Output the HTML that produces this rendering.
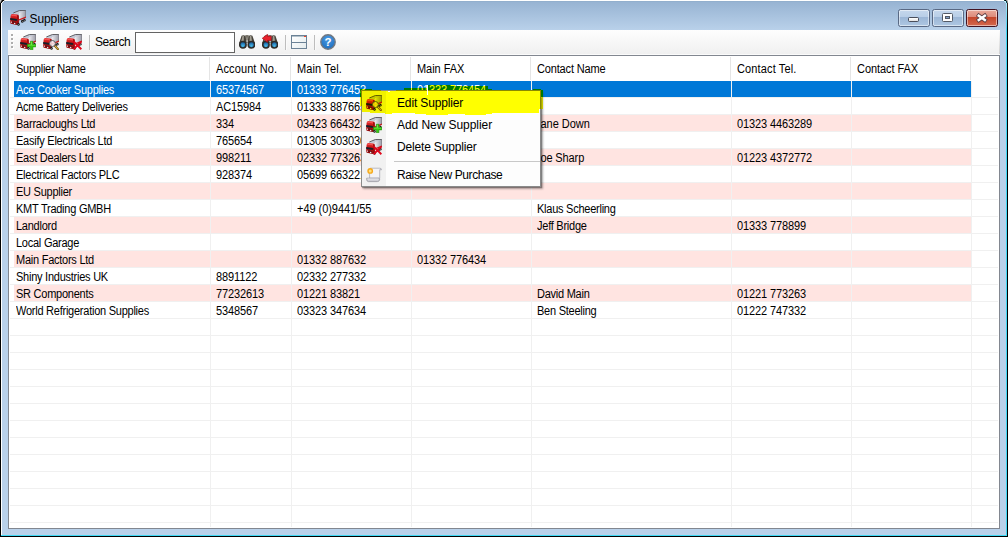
<!DOCTYPE html>
<html><head><meta charset="utf-8"><title>Suppliers</title>
<style>
html,body{margin:0;padding:0;}
body{width:1008px;height:537px;position:relative;overflow:hidden;background:#000;font-family:"Liberation Sans",sans-serif;}
.abs{position:absolute;}
#frame{left:2px;top:1px;width:1004px;height:534px;background:#b9d1ea;}
#title{left:2px;top:1px;width:1004px;height:29px;background:linear-gradient(#8facca 0,#98b4d3 1.5px,#b9d1ea 29px);}
#tb{left:8px;top:30px;width:992px;height:25px;background:linear-gradient(#fefefe 0,#f0f0f0 24px,#fbfbfb 24px);}
#grid{left:8px;top:55px;width:990px;height:472px;background:#fff;border:1px solid #828790;}
.t{position:absolute;white-space:nowrap;font-size:12px;line-height:14px;color:#000;letter-spacing:-0.27px;transform:scaleX(0.917);transform-origin:0 0;}
.vl{position:absolute;width:1px;background:#f0f0f0;}
.hl{position:absolute;height:1px;background:#f0f0f0;left:10px;width:988px;}
.row{position:absolute;left:14px;width:957px;height:16px;}
.wb{top:9px;width:30px;height:16px;border:1px solid #596984;border-radius:2.5px;background:linear-gradient(#c5d7ec 0,#b8cee7 44%,#9bb6d6 44%,#aec7e2 100%);box-shadow:inset 0 0 0 1px rgba(255,255,255,.5);}
.wc{border-color:#431422;background:linear-gradient(#e9a99a 0,#dd8a7a 44%,#c4452a 44%,#d4694e 100%);}
.grip{width:2px;height:2px;background:#adadad;box-shadow:1px 1px 0 #fff;}
.sep{top:35px;width:1px;height:15px;background:#bdbdbd;box-shadow:1px 0 0 #fafafa;}
.mi{position:absolute;left:35px;font-size:12px;line-height:15px;color:#000;letter-spacing:-0.3px;white-space:nowrap;}
</style></head><body>
<div class="abs" id="frame"></div>
<div class="abs" style="left:1px;top:0;width:1006px;height:1px;background:#fff"></div>
<div class="abs" style="left:1px;top:0;width:1px;height:535px;background:#fff"></div>
<div class="abs" style="left:1006px;top:1px;width:1px;height:535px;background:#3fd9f5"></div>
<div class="abs" style="left:1px;top:535px;width:1006px;height:1px;background:#3fd9f5"></div>
<div class="abs" id="title"></div>
<div class="abs" id="tb"></div>
<div class="abs" id="grid"></div>

<div class="row" style="top:81px;background:#0078d7"></div>
<div class="row" style="top:115px;background:#ffe4e1"></div>
<div class="row" style="top:149px;background:#ffe4e1"></div>
<div class="row" style="top:183px;background:#ffe4e1"></div>
<div class="row" style="top:217px;background:#ffe4e1"></div>
<div class="row" style="top:251px;background:#ffe4e1"></div>
<div class="row" style="top:285px;background:#ffe4e1"></div>
<div class="hl" style="top:97px"></div>
<div class="hl" style="top:114px"></div>
<div class="hl" style="top:131px"></div>
<div class="hl" style="top:148px"></div>
<div class="hl" style="top:165px"></div>
<div class="hl" style="top:182px"></div>
<div class="hl" style="top:199px"></div>
<div class="hl" style="top:216px"></div>
<div class="hl" style="top:233px"></div>
<div class="hl" style="top:250px"></div>
<div class="hl" style="top:267px"></div>
<div class="hl" style="top:284px"></div>
<div class="hl" style="top:301px"></div>
<div class="hl" style="top:318px"></div>
<div class="hl" style="top:335px"></div>
<div class="hl" style="top:352px"></div>
<div class="hl" style="top:369px"></div>
<div class="hl" style="top:386px"></div>
<div class="hl" style="top:403px"></div>
<div class="hl" style="top:420px"></div>
<div class="hl" style="top:437px"></div>
<div class="hl" style="top:454px"></div>
<div class="hl" style="top:471px"></div>
<div class="hl" style="top:488px"></div>
<div class="hl" style="top:505px"></div>
<div class="hl" style="top:522px"></div>
<div class="vl" style="left:209px;top:57px;height:23px;background:#e5e5e5"></div>
<div class="vl" style="left:210px;top:81px;height:446px"></div>
<div class="vl" style="left:290px;top:57px;height:23px;background:#e5e5e5"></div>
<div class="vl" style="left:291px;top:81px;height:446px"></div>
<div class="vl" style="left:410px;top:57px;height:23px;background:#e5e5e5"></div>
<div class="vl" style="left:411px;top:81px;height:446px"></div>
<div class="vl" style="left:530px;top:57px;height:23px;background:#e5e5e5"></div>
<div class="vl" style="left:531px;top:81px;height:446px"></div>
<div class="vl" style="left:730px;top:57px;height:23px;background:#e5e5e5"></div>
<div class="vl" style="left:731px;top:81px;height:446px"></div>
<div class="vl" style="left:850px;top:57px;height:23px;background:#e5e5e5"></div>
<div class="vl" style="left:851px;top:81px;height:446px"></div>
<div class="vl" style="left:970px;top:57px;height:23px;background:#e5e5e5"></div>
<div class="vl" style="left:971px;top:81px;height:446px"></div>
<div class="t" style="left:16px;top:62px;letter-spacing:-0.27px">Supplier Name</div>
<div class="t" style="left:216px;top:62px;letter-spacing:0.12px">Account No.</div>
<div class="t" style="left:297px;top:62px;letter-spacing:0.14px">Main Tel.</div>
<div class="t" style="left:417px;top:62px;letter-spacing:-0.05px">Main FAX</div>
<div class="t" style="left:537px;top:62px;letter-spacing:-0.18px">Contact Name</div>
<div class="t" style="left:737px;top:62px;letter-spacing:0.14px">Contact Tel.</div>
<div class="t" style="left:857px;top:62px;letter-spacing:-0.07px">Contact FAX</div>
<div class="t" style="left:16px;top:83px;color:#fff">Ace Cooker Supplies</div>
<div class="t" style="left:216px;top:83px;color:#fff;letter-spacing:-0.13px">65374567</div>
<div class="t" style="left:297px;top:83px;color:#fff;letter-spacing:-0.13px">01333 776453</div>
<div class="t" style="left:417px;top:83px;color:#fff;letter-spacing:-0.13px">01333 776454</div>
<div class="t" style="left:16px;top:100px;color:#000">Acme Battery Deliveries</div>
<div class="t" style="left:216px;top:100px;color:#000;letter-spacing:-0.13px">AC15984</div>
<div class="t" style="left:297px;top:100px;color:#000;letter-spacing:-0.13px">01333 887665</div>
<div class="t" style="left:16px;top:117px;color:#000">Barracloughs Ltd</div>
<div class="t" style="left:216px;top:117px;color:#000;letter-spacing:-0.13px">334</div>
<div class="t" style="left:297px;top:117px;color:#000;letter-spacing:-0.13px">03423 664323</div>
<div class="t" style="left:535px;top:117px;color:#000;letter-spacing:-0.03px">Jane Down</div>
<div class="t" style="left:737px;top:117px;color:#000;letter-spacing:-0.13px">01323 4463289</div>
<div class="t" style="left:16px;top:134px;color:#000">Easify Electricals Ltd</div>
<div class="t" style="left:216px;top:134px;color:#000;letter-spacing:-0.13px">765654</div>
<div class="t" style="left:297px;top:134px;color:#000;letter-spacing:-0.13px">01305 303030</div>
<div class="t" style="left:16px;top:151px;color:#000">East Dealers Ltd</div>
<div class="t" style="left:216px;top:151px;color:#000;letter-spacing:-0.13px">998211</div>
<div class="t" style="left:297px;top:151px;color:#000;letter-spacing:-0.13px">02332 773263</div>
<div class="t" style="left:535px;top:151px;color:#000;letter-spacing:-0.12px">Joe Sharp</div>
<div class="t" style="left:737px;top:151px;color:#000;letter-spacing:-0.13px">01223 4372772</div>
<div class="t" style="left:16px;top:168px;color:#000">Electrical Factors PLC</div>
<div class="t" style="left:216px;top:168px;color:#000;letter-spacing:-0.13px">928374</div>
<div class="t" style="left:297px;top:168px;color:#000;letter-spacing:-0.13px">05699 663221</div>
<div class="t" style="left:16px;top:185px;color:#000">EU Supplier</div>
<div class="t" style="left:16px;top:202px;color:#000">KMT Trading GMBH</div>
<div class="t" style="left:297px;top:202px;color:#000;letter-spacing:-0.05px">+49 (0)9441/55</div>
<div class="t" style="left:537px;top:202px;color:#000">Klaus Scheerling</div>
<div class="t" style="left:16px;top:219px;color:#000">Landlord</div>
<div class="t" style="left:537px;top:219px;color:#000">Jeff Bridge</div>
<div class="t" style="left:737px;top:219px;color:#000;letter-spacing:-0.13px">01333 778899</div>
<div class="t" style="left:16px;top:236px;color:#000">Local Garage</div>
<div class="t" style="left:16px;top:253px;color:#000">Main Factors Ltd</div>
<div class="t" style="left:297px;top:253px;color:#000;letter-spacing:-0.13px">01332 887632</div>
<div class="t" style="left:417px;top:253px;color:#000;letter-spacing:-0.13px">01332 776434</div>
<div class="t" style="left:16px;top:270px;color:#000">Shiny Industries UK</div>
<div class="t" style="left:216px;top:270px;color:#000;letter-spacing:-0.13px">8891122</div>
<div class="t" style="left:297px;top:270px;color:#000;letter-spacing:-0.13px">02332 277332</div>
<div class="t" style="left:16px;top:287px;color:#000">SR Components</div>
<div class="t" style="left:216px;top:287px;color:#000;letter-spacing:-0.13px">77232613</div>
<div class="t" style="left:297px;top:287px;color:#000;letter-spacing:-0.13px">01221 83821</div>
<div class="t" style="left:537px;top:287px;color:#000">David Main</div>
<div class="t" style="left:737px;top:287px;color:#000;letter-spacing:-0.13px">01221 773263</div>
<div class="t" style="left:16px;top:304px;color:#000">World Refrigeration Supplies</div>
<div class="t" style="left:216px;top:304px;color:#000;letter-spacing:-0.13px">5348567</div>
<div class="t" style="left:297px;top:304px;color:#000;letter-spacing:-0.13px">03323 347634</div>
<div class="t" style="left:537px;top:304px;color:#000">Ben Steeling</div>
<div class="t" style="left:737px;top:304px;color:#000;letter-spacing:-0.13px">01222 747332</div>
<div class="abs" style="left:0px;top:0px;width:1px;height:1px;background:#c8c8c8"></div><div class="abs" style="left:1px;top:0px;width:1px;height:1px;background:#707070"></div><div class="abs" style="left:2px;top:0px;width:2px;height:1px;background:#000"></div><div class="abs" style="left:4px;top:0px;width:1px;height:1px;background:#d8d8d8"></div><div class="abs" style="left:0px;top:1px;width:1px;height:1px;background:#b0b0b0"></div><div class="abs" style="left:1px;top:1px;width:2px;height:1px;background:#282828"></div><div class="abs" style="left:3px;top:1px;width:1px;height:1px;background:#f0f4f8"></div><div class="abs" style="left:0px;top:2px;width:1px;height:1px;background:#707070"></div><div class="abs" style="left:1px;top:2px;width:1px;height:1px;background:#101010"></div><div class="abs" style="left:2px;top:2px;width:1px;height:1px;background:#e8eef4"></div><div class="abs" style="left:1004px;top:0px;width:1px;height:1px;background:#103840"></div><div class="abs" style="left:1005px;top:0px;width:1px;height:1px;background:#000"></div><div class="abs" style="left:1006px;top:0px;width:1px;height:1px;background:#808080"></div><div class="abs" style="left:1007px;top:0px;width:1px;height:1px;background:#c8c8c8"></div><div class="abs" style="left:1004px;top:1px;width:1px;height:1px;background:#c8f0fc"></div><div class="abs" style="left:1005px;top:1px;width:1px;height:1px;background:#b0ecfc"></div><div class="abs" style="left:1006px;top:1px;width:1px;height:1px;background:#083038"></div><div class="abs" style="left:1007px;top:1px;width:1px;height:1px;background:#a0a0a0"></div><div class="abs" style="left:1005px;top:2px;width:1px;height:1px;background:#b8ecfc"></div><div class="abs" style="left:1006px;top:2px;width:1px;height:1px;background:#0c4858"></div><div class="abs" style="left:1007px;top:2px;width:1px;height:1px;background:#888"></div><div class="abs" style="left:1006px;top:3px;width:1px;height:28px;background:linear-gradient(#a8e8fa,#40d4f6)"></div><div class="abs" style="left:1007px;top:3px;width:1px;height:26px;background:linear-gradient(#3a2a28,#000)"></div>

<div class="abs" id="menu" style="left:361px;top:90px;width:178px;height:95px;background:#fdfdfd;border:1px solid #8a8a8a;box-shadow:1px 1px 1px rgba(0,0,0,.3),2px 2px 2px rgba(0,0,0,.3)">
 <div class="abs" style="left:0;top:0;width:24px;height:95px;background:#f1f1f1"></div>
 <svg class="abs" style="left:0;top:0" width="178" height="26"><polygon points="0,0 26,0 26,1 28,1 28,0 178,0 178,18 177,18 177,22 130,22 130,23 124,23 124,24 103,24 103,23 86,23 86,24 64,24 64,23 53,23 53,22 30,22 30,23 23,23 23,22 8,22 8,21 0,21" fill="#ffff00"/><polygon points="0,0 24,0 24,23 23,23 23,22 8,22 8,21 0,21" fill="#f1f100"/></svg>
 <div class="abs" style="left:-1px;top:-1px;width:20px;height:1px;background:#8a8a00"></div>
 <div class="abs" style="left:34px;top:-1px;width:145px;height:1px;background:#8a8a00"></div>
 <div class="abs" style="left:-1px;top:0;width:1px;height:15px;background:#8a8a00"></div>
 <div class="abs" style="left:178px;top:0;width:1px;height:18px;background:#8a8a00"></div>
 <div class="abs" style="left:32px;top:70px;width:146px;height:1px;background:#c8c8c8"></div>
 <svg class="abs" style="left:4px;top:4px" width="16" height="16"><use href="#truckY"/><use href="#magY"/></svg>
 <svg class="abs" style="left:4px;top:26px" width="16" height="16"><use href="#truck"/><use href="#plus"/></svg>
 <svg class="abs" style="left:4px;top:48px" width="16" height="16"><use href="#truck"/><use href="#rx"/></svg>
 <svg class="abs" style="left:4px;top:76px" width="16" height="16" viewBox="0 0 16 16"><path d="M4.6 1.2 L13.8 1.2 Q15.6 1.2 15.5 2.8 L13.7 2.8 L13.7 11.2 L3.6 11.2 L3.6 3 Q3.6 1.2 4.6 1.2 Z" fill="#f3f3f6" stroke="#a4a4ac" stroke-width="0.7"/><path d="M13.7 2.8 L15.5 2.8 Q15.4 1.6 14.2 1.4 Q13.7 1.8 13.7 2.8Z" fill="#b4b4bc"/><path d="M0.7 11.2 L13 11.2 Q14 11.4 13.6 12.9 Q13.1 14.6 11.4 14.6 L2.4 14.6 Q0.6 14.4 0.7 12.4 Z" fill="#cfcfd6" stroke="#8e8e96" stroke-width="0.7"/><path d="M1.4 12 L12.6 12" stroke="#f0f0f4" stroke-width="0.8"/><circle cx="4.2" cy="3.9" r="2.9" fill="#f6a81a"/><circle cx="4.2" cy="3.9" r="1.5" fill="#ffe07a"/></svg>
 <div class="mi" style="top:5px;letter-spacing:-0.14px">Edit Supplier</div>
 <div class="mi" style="top:27px;letter-spacing:-0.06px">Add New Supplier</div>
 <div class="mi" style="top:49px;letter-spacing:-0.17px">Delete Supplier</div>
 <div class="mi" style="top:77px;letter-spacing:-0.37px">Raise New Purchase</div>
</div>


<svg width="0" height="0" style="position:absolute">
 <defs>
  <linearGradient id="gtr" x1="0" y1="0" x2="1" y2="0"><stop offset="0" stop-color="#ebebef"/><stop offset="1" stop-color="#9a9aa6"/></linearGradient>
  <linearGradient id="gcab" x1="0" y1="0" x2="0" y2="1"><stop offset="0" stop-color="#e83636"/><stop offset="0.4" stop-color="#c81616"/><stop offset="1" stop-color="#860808"/></linearGradient>
  <radialGradient id="glens" cx="0.5" cy="0.7" r="0.6"><stop offset="0" stop-color="#4cbce8"/><stop offset="1" stop-color="#14589a"/></radialGradient>
  <radialGradient id="ghelp" cx="0.5" cy="0.3" r="0.8"><stop offset="0" stop-color="#4a9ae4"/><stop offset="1" stop-color="#1868b8"/></radialGradient>
  <symbol id="truck" viewBox="0 0 16 16">
   <path d="M3.4 3 L9.4 0.5 L15.8 0.6 L15.8 2 L9.2 4.6 L3.6 4.4 Z" fill="#c6cad6"/>
   <path d="M9 3 L15.9 0.8 L15.9 7.8 L9 10.5 Z" fill="url(#gtr)"/>
   <path d="M3.3 3 L9.4 0.5 L15.9 0.6" stroke="#505056" stroke-width="0.9" fill="none"/>
   <path d="M15.6 0.8 L15.6 7.6" stroke="#77777f" stroke-width="0.7"/>
   <path d="M9 9.3 L15.9 6.5 L15.9 7.9 L9 10.6 Z" fill="#cc1616"/>
   <ellipse cx="12.3" cy="11.2" rx="1.3" ry="1.5" fill="#1c1c1c"/>
   <ellipse cx="14.4" cy="10.2" rx="1.2" ry="1.4" fill="#1c1c1c"/>
   <circle cx="12.4" cy="11.4" r="0.45" fill="#ddd"/><circle cx="14.5" cy="10.4" r="0.4" fill="#ddd"/>
   <path d="M0.6 6 Q0.8 4.2 2.4 4 L7.4 4.6 Q8.7 4.9 8.7 6.2 L8.8 13.3 L6.6 15.1 L1 13.8 Q0.1 13.4 0.1 12.4 Z" fill="url(#gcab)"/>
   <path d="M1.6 5 Q4 4.6 7 5.4 L7 6.4 Q4 5.6 1.4 6 Z" fill="#ff6a6a" opacity="0.7"/><path d="M7.2 5 L8.7 5.6 L8.8 13.3 L7.2 14.4 Z" fill="#9a0c0c"/>
   <path d="M0.2 8 L6.9 9 L6.9 11 L0.2 10 Z" fill="#15202a"/>
   <path d="M2 11.2 L5.6 12 L5.6 13.4 L2 12.6 Z" fill="#5a1018"/>
   <ellipse cx="8.5" cy="14.2" rx="1.2" ry="1.5" fill="#1c1c1c"/>
   <circle cx="8.6" cy="14.4" r="0.45" fill="#ddd"/>
   <circle cx="1.3" cy="12.2" r="0.65" fill="#fff"/>
   <circle cx="4.7" cy="13.4" r="0.65" fill="#fff"/>
  </symbol>
  <symbol id="plus" viewBox="0 0 16 16">
   <path d="M10.3 7.3 H12.9 V10.3 H15.8 V12.9 H12.9 V15.8 H10.3 V12.9 H7.3 V10.3 H10.3 Z" fill="#34c810" stroke="#228c0a" stroke-width="0.6"/>
   <path d="M10.8 7.8 H12 V10.8 H15 V11.6 H8 V10.8 H10.8 Z" fill="#8af060" opacity="0.7"/>
  </symbol>
  <symbol id="mag" viewBox="0 0 16 16">
   <path d="M11.6 11.6 L15.2 15.4" stroke="#7a5a16" stroke-width="2.2" stroke-linecap="round"/>
   <path d="M11.8 11.8 L15 15.2" stroke="#e0b84a" stroke-width="1" stroke-linecap="round"/>
   <circle cx="9.4" cy="9.5" r="3" fill="#f6e6ea" fill-opacity="0.88" stroke="#55595e" stroke-width="1"/>
  </symbol>
  <symbol id="rx" viewBox="0 0 16 16">
   <path d="M7.6 7.4 L15.4 15.2 M15.4 7.4 L7.6 15.2" stroke="#e0081c" stroke-width="2" stroke-linecap="butt"/>
  </symbol>
  <symbol id="bino" viewBox="0 0 16 16">
   <path d="M6 1.3 L10 1.3 L10.4 6.4 L5.8 6.4 Z" fill="#8e8a80"/>
   <path d="M7.2 1.3 L8.8 1.3 L8 4.4 Z" fill="#5c584e"/>
   <path d="M2.6 1.7 Q4.3 0.7 6.2 1.7 L7.9 9 L0.2 9 Z" fill="#46423a"/>
   <path d="M9.9 1.7 Q11.7 0.7 13.4 1.7 L15.9 9 L8.3 9 Z" fill="#46423a"/>
   <path d="M3.5 2 L4.9 2 L4.7 7.6 L2.2 7.6 Z" fill="#a29e92"/>
   <path d="M10.9 2 L12.3 2 L13 7.6 L10.5 7.6 Z" fill="#a29e92"/>
   <circle cx="3.9" cy="10.7" r="3.2" fill="url(#glens)" stroke="#2e2c28" stroke-width="1.5"/>
   <circle cx="12.4" cy="10.7" r="3.2" fill="url(#glens)" stroke="#2e2c28" stroke-width="1.5"/>
  </symbol>
 <linearGradient id="gtrY" x1="0" y1="0" x2="1" y2="0"><stop offset="0" stop-color="#ebeb00"/><stop offset="1" stop-color="#9a9a00"/></linearGradient><linearGradient id="gcabY" x1="0" y1="0" x2="0" y2="1"><stop offset="0" stop-color="#e83600"/><stop offset="0.4" stop-color="#c81600"/><stop offset="1" stop-color="#860800"/></linearGradient><symbol id="truckY" viewBox="0 0 16 16">
   <path d="M3.4 3 L9.4 0.5 L15.8 0.6 L15.8 2 L9.2 4.6 L3.6 4.4 Z" fill="#c6ca00"/>
   <path d="M9 3 L15.9 0.8 L15.9 7.8 L9 10.5 Z" fill="url(#gtrY)"/>
   <path d="M3.3 3 L9.4 0.5 L15.9 0.6" stroke="#505000" stroke-width="0.9" fill="none"/>
   <path d="M15.6 0.8 L15.6 7.6" stroke="#777700" stroke-width="0.7"/>
   <path d="M9 9.3 L15.9 6.5 L15.9 7.9 L9 10.6 Z" fill="#cc1600"/>
   <ellipse cx="12.3" cy="11.2" rx="1.3" ry="1.5" fill="#1c1c00"/>
   <ellipse cx="14.4" cy="10.2" rx="1.2" ry="1.4" fill="#1c1c00"/>
   <circle cx="12.4" cy="11.4" r="0.45" fill="#dddd00"/><circle cx="14.5" cy="10.4" r="0.4" fill="#dddd00"/>
   <path d="M0.6 6 Q0.8 4.2 2.4 4 L7.4 4.6 Q8.7 4.9 8.7 6.2 L8.8 13.3 L6.6 15.1 L1 13.8 Q0.1 13.4 0.1 12.4 Z" fill="url(#gcabY)"/>
   <path d="M1.6 5 Q4 4.6 7 5.4 L7 6.4 Q4 5.6 1.4 6 Z" fill="#ff6a00" opacity="0.7"/><path d="M7.2 5 L8.7 5.6 L8.8 13.3 L7.2 14.4 Z" fill="#9a0c00"/>
   <path d="M0.2 8 L6.9 9 L6.9 11 L0.2 10 Z" fill="#152000"/>
   <path d="M2 11.2 L5.6 12 L5.6 13.4 L2 12.6 Z" fill="#5a1000"/>
   <ellipse cx="8.5" cy="14.2" rx="1.2" ry="1.5" fill="#1c1c00"/>
   <circle cx="8.6" cy="14.4" r="0.45" fill="#dddd00"/>
   <circle cx="1.3" cy="12.2" r="0.65" fill="#ffff00"/>
   <circle cx="4.7" cy="13.4" r="0.65" fill="#ffff00"/>
  </symbol><symbol id="magY" viewBox="0 0 16 16">
   <path d="M11.6 11.6 L15.2 15.4" stroke="#7a5a00" stroke-width="2.2" stroke-linecap="round"/>
   <path d="M11.8 11.8 L15 15.2" stroke="#e0b800" stroke-width="1" stroke-linecap="round"/>
   <circle cx="9.4" cy="9.5" r="3" fill="#f6e600" fill-opacity="0.88" stroke="#555900" stroke-width="1"/>
  </symbol></defs>
</svg>
<!-- title -->
<svg class="abs" style="left:10px;top:10px" width="16" height="16"><use href="#truck"/></svg>
<div class="abs" style="left:29.5px;top:12px;font-size:12px;line-height:15px;color:#000;letter-spacing:-0.1px;white-space:nowrap">Suppliers</div>
<!-- window buttons -->
<div class="abs wb" style="left:898px"><div class="abs" style="left:9px;top:7px;width:9px;height:3px;background:linear-gradient(#fff,#e4e4e4);border:1px solid #4a4e5a;border-radius:1.5px"></div></div>
<div class="abs wb" style="left:932px"><svg class="abs" style="left:9px;top:3px" width="12" height="10" viewBox="0 0 12 10"><rect x="0.5" y="0.5" width="10" height="8" rx="1" fill="#fff" stroke="#535a66"/><rect x="3.5" y="3.5" width="4" height="2" fill="#7f9cc4" stroke="#535a66"/></svg></div>
<div class="abs wb wc" style="left:966px"><svg class="abs" style="left:9px;top:2px" width="13" height="11" viewBox="0 0 13 11"><path d="M2.8 3.7 L8.8 8 M8.8 3.7 L2.8 8" stroke="#5a3f44" stroke-width="4.2" stroke-linecap="square"/><path d="M2.8 3.7 L8.8 8 M8.8 3.7 L2.8 8" stroke="#fff" stroke-width="2.6" stroke-linecap="square"/></svg></div>
<!-- toolbar items -->
<div class="abs" style="left:999px;top:31px;width:1px;height:23px;background:linear-gradient(#fbfbfb,#d0d0d0)"></div>
<div class="abs grip" style="left:11px;top:34px"></div><div class="abs grip" style="left:11px;top:38px"></div><div class="abs grip" style="left:11px;top:42px"></div><div class="abs grip" style="left:11px;top:46px"></div>
<svg class="abs" style="left:20px;top:34px" width="16" height="16"><use href="#truck"/><use href="#plus"/></svg>
<svg class="abs" style="left:43px;top:34px" width="16" height="16"><use href="#truck"/><use href="#mag"/></svg>
<svg class="abs" style="left:66px;top:34px" width="16" height="16"><use href="#truck"/><use href="#rx"/></svg>
<div class="abs sep" style="left:89px"></div>
<div class="abs" style="left:95px;top:35px;font-size:12px;line-height:15px;color:#000;letter-spacing:-0.45px;white-space:nowrap">Search</div>
<div class="abs" style="left:135px;top:32px;width:98px;height:19px;background:#fff;border:1px solid #646464"></div>
<svg class="abs" style="left:239px;top:34px" width="16" height="16"><use href="#bino"/></svg>
<svg class="abs" style="left:262px;top:34px" width="16" height="16"><use href="#bino"/><path d="M0.2 4.3 L5.6 0.2 L5.6 2.2 L9.2 2.2 L9.2 6.4 L5.6 6.4 L5.6 8.4 Z" fill="#e8222c" stroke="#a00c14" stroke-width="0.6"/></svg>
<div class="abs sep" style="left:285px"></div>
<div class="abs" style="left:291px;top:35px;width:14px;height:12px;border:1px solid #6b8296;background:linear-gradient(135deg,#fff,#e4ecee);box-shadow:inset 0 1px 0 #b4c2cc"><div class="abs" style="left:0;top:6px;width:14px;height:1px;background:#6b8296"></div><div class="abs" style="left:12px;top:0;width:2px;height:1px;background:#f04020"></div></div>
<div class="abs sep" style="left:314px"></div>
<svg class="abs" style="left:320px;top:34px" width="16" height="16" viewBox="0 0 16 16"><circle cx="8" cy="8" r="7.2" fill="url(#ghelp)" stroke="#727880" stroke-width="1.4"/><text x="8" y="12.2" text-anchor="middle" font-family="Liberation Sans, sans-serif" font-weight="bold" font-size="11.5" fill="#fff">?</text></svg>

<div class="abs" style="left:360px;top:89px;width:12px;height:1px;background:#007800;overflow:hidden"><div class="vl" style="left:51px;top:0;height:1px;background:#f0f000"></div><div class="t" style="left:-63px;top:-6px;color:#ffff00;letter-spacing:-0.13px">01333 776453</div><div class="t" style="left:57px;top:-6px;color:#ffff00;letter-spacing:-0.13px">01333 776454</div></div><div class="abs" style="left:360px;top:90px;width:1px;height:7px;background:#007800;overflow:hidden"><div class="vl" style="left:51px;top:0;height:7px;background:#f0f000"></div><div class="t" style="left:-63px;top:-7px;color:#ffff00;letter-spacing:-0.13px">01333 776453</div><div class="t" style="left:57px;top:-7px;color:#ffff00;letter-spacing:-0.13px">01333 776454</div></div><div class="abs" style="left:404px;top:88px;width:23px;height:2px;background:#007800;overflow:hidden"><div class="vl" style="left:7px;top:0;height:2px;background:#f0f000"></div><div class="t" style="left:-107px;top:-5px;color:#ffff00;letter-spacing:-0.13px">01333 776453</div><div class="t" style="left:13px;top:-5px;color:#ffff00;letter-spacing:-0.13px">01333 776454</div></div><div class="abs" style="left:428px;top:85px;width:27px;height:5px;background:#007800;overflow:hidden"><div class="vl" style="left:-17px;top:0;height:5px;background:#f0f000"></div><div class="t" style="left:-131px;top:-2px;color:#ffff00;letter-spacing:-0.13px">01333 776453</div><div class="t" style="left:-11px;top:-2px;color:#ffff00;letter-spacing:-0.13px">01333 776454</div></div><div class="abs" style="left:455px;top:86px;width:33px;height:4px;background:#007800;overflow:hidden"><div class="vl" style="left:-44px;top:0;height:4px;background:#f0f000"></div><div class="t" style="left:-158px;top:-3px;color:#ffff00;letter-spacing:-0.13px">01333 776453</div><div class="t" style="left:-38px;top:-3px;color:#ffff00;letter-spacing:-0.13px">01333 776454</div></div><div class="abs" style="left:488px;top:89px;width:4px;height:1px;background:#007800;overflow:hidden"><div class="vl" style="left:-77px;top:0;height:1px;background:#f0f000"></div><div class="t" style="left:-191px;top:-6px;color:#ffff00;letter-spacing:-0.13px">01333 776453</div><div class="t" style="left:-71px;top:-6px;color:#ffff00;letter-spacing:-0.13px">01333 776454</div></div><div class="abs" style="left:533px;top:89px;width:8px;height:1px;background:#007800;overflow:hidden"><div class="vl" style="left:-122px;top:0;height:1px;background:#f0f000"></div><div class="t" style="left:-236px;top:-6px;color:#ffff00;letter-spacing:-0.13px">01333 776453</div><div class="t" style="left:-116px;top:-6px;color:#ffff00;letter-spacing:-0.13px">01333 776454</div></div><div class="abs" style="left:541px;top:90px;width:2px;height:7px;background:#007800;overflow:hidden"><div class="vl" style="left:-130px;top:0;height:7px;background:#f0f000"></div><div class="t" style="left:-244px;top:-7px;color:#ffff00;letter-spacing:-0.13px">01333 776453</div><div class="t" style="left:-124px;top:-7px;color:#ffff00;letter-spacing:-0.13px">01333 776454</div></div><div class="abs" style="left:360px;top:97px;width:1px;height:1px;background:#f0f000"></div><div class="abs" style="left:360px;top:98px;width:1px;height:8px;background:#ffff00"></div><div class="abs" style="left:541px;top:97px;width:2px;height:1px;background:#c0c000"></div><div class="abs" style="left:541px;top:98px;width:1px;height:11px;background:#a8a800"></div><div class="abs" style="left:542px;top:98px;width:1px;height:11px;background:#c8c800"></div><div class="abs" style="left:427px;top:85px;width:1px;height:10px;background:#fff"></div>
</body></html>
